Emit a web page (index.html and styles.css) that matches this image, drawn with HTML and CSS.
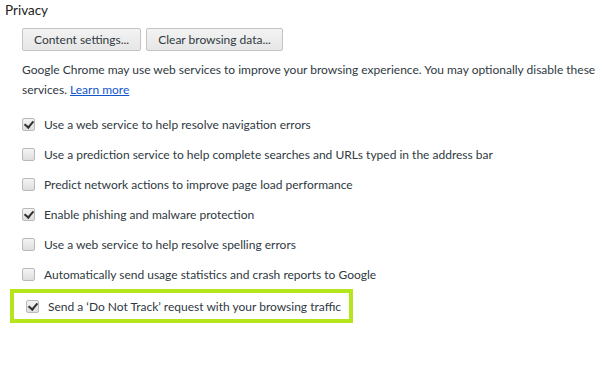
FILE: index.html
```html
<!DOCTYPE html>
<html lang="en">
  <head>
    <meta charset="UTF-8" />
    <title>Privacy settings</title>
    <link rel="stylesheet" href="styles.css">
  </head>
  <body>
    <section class="privacy">
      <h3 class="section-title">Privacy</h3>

      <div class="section-body">
        <div class="button-row">
          <button class="btn">Content settings...</button>
          <button class="btn">Clear browsing data...</button>
        </div>

        <p class="note">
          Google Chrome may use web services to improve your browsing experience. You may optionally disable these
          services. <a href="#">Learn more</a>
        </p>

        <ul class="options">
          <li class="option">
            <span class="box checked"></span>
            Use a web service to help resolve navigation errors
          </li>
          <li class="option">
            <span class="box"></span>
            Use a prediction service to help complete searches and URLs typed in the address bar
          </li>
          <li class="option">
            <span class="box"></span>
            Predict network actions to improve page load performance
          </li>
          <li class="option">
            <span class="box checked"></span>
            Enable phishing and malware protection
          </li>
          <li class="option">
            <span class="box"></span>
            Use a web service to help resolve spelling errors
          </li>
          <li class="option">
            <span class="box"></span>
            Automatically send usage statistics and crash reports to Google
          </li>
          <li class="option highlight">
            <span class="box checked"></span>
            Send a ‘Do Not Track’ request with your browsing traffic
          </li>
        </ul>
      </div>
    </section>
  </body>
</html>
```

FILE: styles.css
```css
* {
  box-sizing: border-box;
}

body {
  margin: 0;
  background: #ffffff;
  font-family: Lato, "Noto Sans", sans-serif;
  font-size: 12px;
  color: #303942;
}

.privacy {
  padding: 0 0 0 5px;
}

.section-title {
  margin: 0;
  font-size: 13.5px;
  font-weight: normal;
  line-height: 20px;
  color: #222222;
}

.section-body {
  padding-left: 17px;
}

.button-row {
  display: flex;
  gap: 5px;
  margin-top: 8px;
}

.btn {
  height: 23px;
  padding: 0 11px;
  border: 1px solid #c4c4c4;
  border-radius: 2px;
  background: linear-gradient(#f3f3f3, #e6e6e6);
  font-family: inherit;
  font-size: 12px;
  color: #303942;
}

.note {
  margin: 9px 0 0;
  line-height: 20px;
}

.note a {
  color: #1155cc;
}

.options {
  list-style: none;
  margin: 9px 0 0 -17px;
  padding: 0;
}

.option {
  display: flex;
  align-items: center;
  gap: 9px;
  height: 30px;
  padding-left: 17px;
  white-space: nowrap;
}

.box {
  width: 13px;
  height: 13px;
  border: 1px solid #b9b9b9;
  border-radius: 2px;
  background: linear-gradient(#f4f4f4, #dedede);
  position: relative;
}

.box.checked::after {
  content: "";
  position: absolute;
  left: 3px;
  top: 0;
  width: 4px;
  height: 7px;
  border: solid #333333;
  border-width: 0 2px 2px 0;
  transform: rotate(40deg);
}

.option.highlight {
  width: 343px;
  height: 34px;
  margin-left: 5px;
  padding-left: 12px;
  border: 4px solid #b5e51d;
}
```
